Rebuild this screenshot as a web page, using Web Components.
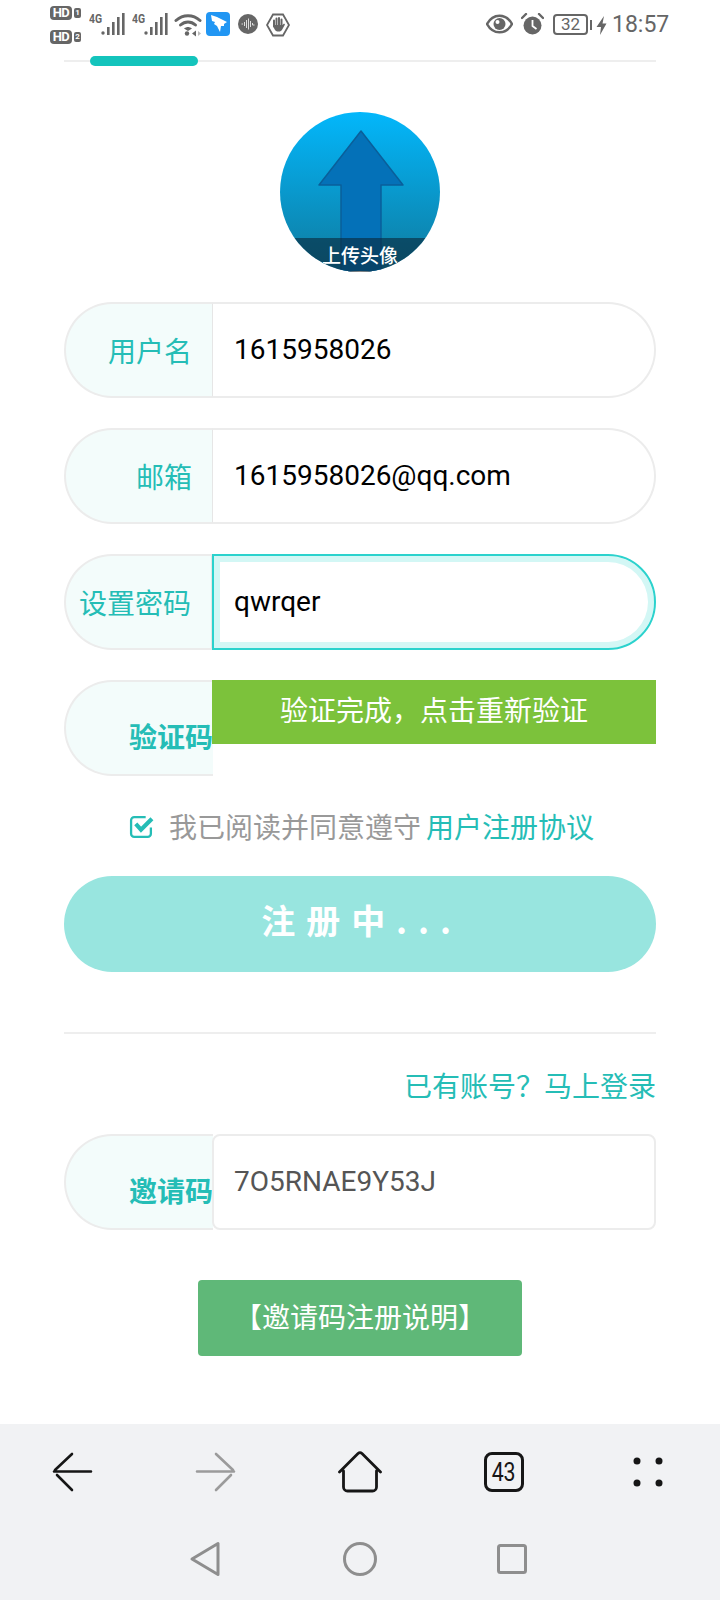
<!DOCTYPE html>
<html lang="zh">
<head>
<meta charset="utf-8">
<title>注册</title>
<style>
	html,body{margin:0;padding:0;background:#fff;}
	body{width:720px;height:1600px;overflow:hidden;font-family:Roboto,"Noto Sans CJK SC",sans-serif;display:flex;flex-direction:column;}
</style>
</head>
<body>
<status-bar></status-bar>
<register-page>
	<tab-line></tab-line>
	<avatar-upload></avatar-upload>
	<form-row label="用户名">1615958026</form-row>
	<form-row label="邮箱">1615958026@qq.com</form-row>
	<form-row label="设置密码" focused>qwrqer</form-row>
	<form-row label="验证码" low verify>验证完成，点击重新验证</form-row>
	<agree-line></agree-line>
	<submit-button>注 册 中 . . .</submit-button>
	<login-link></login-link>
	<form-row label="邀请码" low square>7O5RNAE9Y53J</form-row>
	<invite-note>【邀请码注册说明】</invite-note>
</register-page>
<nav-bar></nav-bar>

<script>
class statusBar extends HTMLElement {
	constructor(){
		super();
		this.attachShadow({mode:'open'});
		const bars = `<svg width="24" height="24" viewBox="0 0 24 24" style="margin:8px 0 0 0"><g fill="#666"><circle cx="2" cy="20" r="1.7"/><rect x="6" y="14" width="2.6" height="8"/><rect x="11" y="9" width="2.6" height="13"/><rect x="16" y="4" width="2.6" height="18"/><rect x="21" y="0" width="2.6" height="22"/></g></svg>`;
		this.shadowRoot.innerHTML = `
			<style>
				:host{display:flex;height:50px;flex:none;align-items:flex-start;padding:5px 50px 0 50px;box-sizing:border-box;color:#666;font-family:Roboto,sans-serif;}
				svg{display:block;flex:none;}
				.hd{display:flex;flex-direction:column;gap:10px;margin-top:1px;width:32px;}
				.hd div{display:flex;align-items:center;gap:2px;}
				.hd b{background:#666;color:#fff;font-size:13px;line-height:14px;height:14px;width:22px;text-align:center;border-radius:4px;letter-spacing:-.5px;}
				.hd i{background:#666;color:#fff;font-size:8px;font-style:normal;font-weight:700;line-height:10px;width:7px;height:10px;text-align:center;border-radius:2px;}
				.sig{display:flex;margin-left:7px;width:36px;}
				.sig span{font-size:13px;font-weight:700;line-height:11px;margin-top:8px;width:12px;flex:none;transform:scaleX(.8);transform-origin:left;}
				.left{display:flex;flex:1;}
				.time{font-size:23px;line-height:40px;margin:0 2px 0 3px;width:56px;}
				.batt{width:35px;height:21px;box-sizing:border-box;border:2px solid #666;border-radius:4px;font-size:17px;line-height:17px;text-align:center;flex:none;margin:9px 0 0 9px;}
			</style>
			<div class="left">
				<div class="hd"><div><b>HD</b><i>1</i></div><div><b>HD</b><i>2</i></div></div>
				<div class="sig"><span>4G</span>${bars}</div>
				<div class="sig"><span>4G</span>${bars}</div>
				<svg width="30" height="24" viewBox="0 0 30 24" style="margin:8px 0 0 6px"><g fill="none" stroke="#666" stroke-width="3" stroke-linecap="round"><path d="M2 7.500C9 1 19 1 26 7.500"/><path d="M6.500 12C11 8 17 8 21.500 12"/></g><path d="M10 15.500C13 13.500 15 13.500 18 15.500L14 18z" fill="#666"/><circle cx="13" cy="20.500" r="2.200" fill="#666"/><path d="M18 20.500l4-3v6z" fill="#666"/><path d="M24 18l3 2.500-3 2.500z" fill="#bbb"/></svg>
				<svg width="24" height="24" viewBox="0 0 24 24" style="margin:7px 0 0 2px"><rect width="24" height="24" rx="4" fill="#2196f3"/><path d="M5 3l6 2 10 5-3 2 0 2-3 0-1 6-3-6-3-2 1-2-3-1z" fill="#fff"/></svg>
				<svg width="20" height="20" viewBox="0 0 20 20" style="margin:9px 0 0 8px"><circle cx="10" cy="10" r="10" fill="#666"/><path d="M3.500 10h1.500M6.500 8v4M8.500 6v8M10.500 4.500v11M12.500 7v6M14.500 9v2h2" stroke="#ddd" stroke-width="1" fill="none"/></svg>
				<svg width="24" height="24" viewBox="0 0 24 24" style="margin:8px 0 0 8px"><path d="M7 1.500h10L23 12l-6 10.500H7L1 12z" fill="#fff" stroke="#666" stroke-width="1.800"/><path d="M8 7.500v6M10.500 5.500v7M13 5v7M15.500 6.500v6" stroke="#666" stroke-width="2" stroke-linecap="round"/><path d="M7 12h9.500l1.500-1.500 1 1-2.500 4.500c-1 2-2 2.500-4 2.500-3 0-4-1.500-5.500-6.500z" fill="#666"/></svg>
			</div>
			<svg width="27" height="20" viewBox="0 0 27 20" style="margin-top:9px"><path d="M1 10C7-1 20-1 26 10 20 21 7 21 1 10z" fill="none" stroke="#666" stroke-width="2.500"/><circle cx="13.500" cy="10" r="6" fill="#666"/><circle cx="11.500" cy="8" r="2" fill="#fff"/></svg>
			<svg width="23" height="22" viewBox="0 0 23 22" style="margin:8px 0 0 8px"><circle cx="11.500" cy="12.500" r="9" fill="#666"/><path d="M11.500 7v6l4 3" fill="none" stroke="#fff" stroke-width="1.800"/><path d="M1 5l4-4M22 5l-4-4" stroke="#666" stroke-width="2.400" stroke-linecap="round"/></svg>
			<div class="batt">32</div>
			<svg width="19" height="19" viewBox="0 0 19 19" style="margin:11px 0 0 2px"><rect x="0" y="4" width="2" height="10" fill="#666"/><path d="M14 0L6.500 11H11L10 19 16.500 7.500H12.500z" fill="#666"/></svg>
			<span class="time">18:57</span>
		`;
	}
}
customElements.define('status-bar', statusBar);

class registerPage extends HTMLElement {
	constructor(){
		super();
		this.attachShadow({mode:'open'});
		this.shadowRoot.innerHTML = `
			<style>
				:host{display:flex;flex-direction:column;flex:1;padding:0 64px;background:#fff;}
			</style>
			<slot></slot>
		`;
	}
}
customElements.define('register-page', registerPage);

class tabLine extends HTMLElement {
	constructor(){
		super();
		this.attachShadow({mode:'open'});
		this.shadowRoot.innerHTML = `
			<style>
				:host{display:block;height:16px;box-sizing:border-box;padding-top:6px;}
				.line{height:2px;background:#eeeeee;margin-top:4px;}
				.bar{width:108px;height:10px;margin:-6px 0 0 26px;border-radius:5px;background:#14c4bc;}
			</style>
			<div class="line"></div>
			<div class="bar"></div>
		`;
	}
}
customElements.define('tab-line', tabLine);

class avatarUpload extends HTMLElement {
	constructor(){
		super();
		this.attachShadow({mode:'open'});
		this.shadowRoot.innerHTML = `
			<style>
				:host{display:block;width:160px;height:160px;margin:46px auto 30px;position:relative;border-radius:50%;overflow:hidden;background:linear-gradient(#03b7fb,#0f7a9e);}
				svg{display:block;}
				.tip{position:absolute;left:0;right:0;bottom:0;height:31px;padding-bottom:2px;background:rgba(10,40,60,.62);border-bottom:1px solid #8a8a8a;box-sizing:content-box;color:#fff;font-size:19px;font-weight:500;line-height:33px;text-align:center;font-family:"Noto Sans CJK SC",sans-serif;}
			</style>
			<svg width="160" height="160" viewBox="0 0 160 160">
				<path d="M81 19L39 73H61V160H101V73H123Z" fill="#0471b8" stroke="#0a5f9a" stroke-width="1.500" stroke-linejoin="round"/>
			</svg>
			<div class="tip">上传头像</div>
		`;
	}
}
customElements.define('avatar-upload', avatarUpload);

class formRow extends HTMLElement {
	connectedCallback(){
		this.attachShadow({mode:'open'});
		const label = this.getAttribute('label');
		this.shadowRoot.innerHTML = `
			<style>
				:host{display:flex;height:96px;margin-bottom:30px;font-family:Roboto,"Noto Sans CJK SC",sans-serif;font-size:28px;}
				.label{width:149px;flex:none;box-sizing:border-box;border:2px solid #ececec;border-right:1px solid #e6e6e6;border-radius:48px 0 0 48px;background:#f3fcfb;color:#25bdb6;display:flex;align-items:center;justify-content:flex-end;padding-right:20px;font-size:28px;font-family:"Noto Sans CJK SC",sans-serif;}
				.value{flex:1;box-sizing:border-box;border:2px solid #ececec;border-left:0;border-radius:0 48px 48px 0;padding:0 0 2px 21px;display:flex;align-items:center;color:#000;background:#fff;}
				:host([focused]) .label{width:148px;}
				:host([focused]) .value{border:2px solid #2bd2cd;border-radius:0 48px 48px 0;padding-left:20px;box-shadow:inset 0 0 0 6px #d3f7f5;}
				:host([low]) .label{border-right:0;align-items:flex-end;padding:0 0 18px 0;font-weight:700;}
				:host([low]) .value{margin-left:-1px;}
				:host([square]) .value{border:2px solid #ececec;border-radius:8px;color:#555;padding-left:20px;}
				:host([square]){margin-bottom:0;}
				:host([verify]){margin-bottom:0;}
				:host([verify]) .value{border:0;border-radius:0;padding:0;display:block;background:none;}
				.pass{height:64px;background:#7cc23b;color:#fff;line-height:59px;text-align:center;font-family:"Noto Sans CJK SC",sans-serif;}
			</style>
			<div class="label">${label}</div>
			<div class="value">${this.hasAttribute('verify') ? '<div class="pass"><slot></slot></div>' : '<slot></slot>'}</div>
		`;
	}
}
customElements.define('form-row', formRow);

class agreeLine extends HTMLElement {
	constructor(){
		super();
		this.attachShadow({mode:'open'});
		this.shadowRoot.innerHTML = `
			<style>
				:host{display:flex;align-items:center;height:100px;padding-left:65px;font-size:28px;font-family:"Noto Sans CJK SC",sans-serif;color:#999;}
				svg{display:block;margin-right:15px;flex:none;}
				a{color:#25bdb6;margin-left:5px;}
			</style>
			<svg width="25" height="25" viewBox="0 0 24 24"><path d="M21 13v6a3 3 0 0 1-3 3H5a3 3 0 0 1-3-3V6a3 3 0 0 1 3-3h11" fill="none" stroke="#25bdb6" stroke-width="2.200"/><path d="M6.500 9.500L11.500 15 22 4.500" fill="none" stroke="#25bdb6" stroke-width="4"/></svg>
			<span>我已阅读并同意遵守</span><a>用户注册协议</a>
		`;
	}
}
customElements.define('agree-line', agreeLine);

class submitButton extends HTMLElement {
	constructor(){
		super();
		this.attachShadow({mode:'open'});
		this.shadowRoot.innerHTML = `
			<style>
				:host{display:flex;align-items:center;justify-content:center;height:96px;border-radius:48px;background:#98e5df;color:#fff;font-size:34px;font-weight:700;letter-spacing:1.6px;padding:0 6px 9px 0;box-sizing:border-box;font-family:"Noto Sans CJK SC",sans-serif;}
			</style>
			<slot></slot>
		`;
	}
}
customElements.define('submit-button', submitButton);

class loginLink extends HTMLElement {
	constructor(){
		super();
		this.attachShadow({mode:'open'});
		this.shadowRoot.innerHTML = `
			<style>
				:host{display:block;margin-top:60px;border-top:2px solid #eeeeee;text-align:right;font-size:28px;line-height:40px;padding-top:31px;height:40px;margin-bottom:29px;color:#25bdb6;font-family:"Noto Sans CJK SC",sans-serif;}
			</style>
			已有账号？马上登录
		`;
	}
}
customElements.define('login-link', loginLink);

class inviteNote extends HTMLElement {
	constructor(){
		super();
		this.attachShadow({mode:'open'});
		this.shadowRoot.innerHTML = `
			<style>
				:host{display:flex;align-items:center;justify-content:center;align-self:center;width:324px;height:76px;box-sizing:border-box;padding-bottom:4px;margin-top:50px;border-radius:4px;background:#5fb878;color:#fff;font-size:28px;font-family:"Noto Sans CJK SC",sans-serif;}
			</style>
			<slot></slot>
		`;
	}
}
customElements.define('invite-note', inviteNote);

class navBar extends HTMLElement {
	constructor(){
		super();
		this.attachShadow({mode:'open'});
		this.shadowRoot.innerHTML = `
			<style>
				:host{display:block;flex:none;height:176px;background:#f1f2f4;}
				.top{display:grid;grid-template-columns:repeat(5,144px);height:96px;justify-items:center;align-items:center;}
				.sys{display:flex;justify-content:center;align-items:center;height:66px;margin-top:6px;padding-right:4px;}
				.sys svg:nth-child(2){margin:0 120px 0 122px;}
				svg{display:block;}
				.tabs{width:40px;height:40px;box-sizing:border-box;border:3px solid #161616;border-radius:8px;color:#161616;font-size:26px;line-height:34px;text-align:center;font-family:Roboto,sans-serif;}
				.tabs span{display:inline-block;transform:scaleX(.82);}
			</style>
			<div class="top">
				<svg width="44" height="40" viewBox="0 0 44 40"><path d="M4 19.500H41M22 2L5 18M7 23L22 38" fill="none" stroke="#161616" stroke-width="2.600" stroke-linecap="round"/></svg>
				<svg width="44" height="40" viewBox="0 0 44 40"><path d="M3 19.500H40M22 2L39 18M37 23L22 38" fill="none" stroke="#9b9b9b" stroke-width="2.600" stroke-linecap="round"/></svg>
				<svg width="44" height="42" viewBox="0 0 44 42"><path d="M1.500 21L20 2.500a3 3 0 0 1 4 0L42.500 21M5.500 20V36a4 4 0 0 0 4 4H34.500a4 4 0 0 0 4-4V20" fill="none" stroke="#161616" stroke-width="2.800" stroke-linecap="round"/></svg>
				<div class="tabs"><span>43</span></div>
				<svg width="30" height="30" viewBox="0 0 30 30"><g fill="#161616"><circle cx="4" cy="4" r="3.500"/><circle cx="26" cy="4" r="3.500"/><circle cx="4" cy="26" r="3.500"/><circle cx="26" cy="26" r="3.500"/></g></svg>
			</div>
			<div class="sys">
				<svg width="32" height="36" viewBox="0 0 32 36"><path d="M29 2.500V33.500L3 18Z" fill="none" stroke="#8e8e8e" stroke-width="3" stroke-linejoin="round"/></svg>
				<svg width="34" height="34" viewBox="0 0 34 34"><circle cx="17" cy="17" r="15.500" fill="none" stroke="#8e8e8e" stroke-width="3"/></svg>
				<svg width="30" height="30" viewBox="0 0 30 30"><rect x="1.500" y="1.500" width="27" height="27" rx="2" fill="none" stroke="#8e8e8e" stroke-width="3"/></svg>
			</div>
		`;
	}
}
customElements.define('nav-bar', navBar);
</script>
</body>
</html>
